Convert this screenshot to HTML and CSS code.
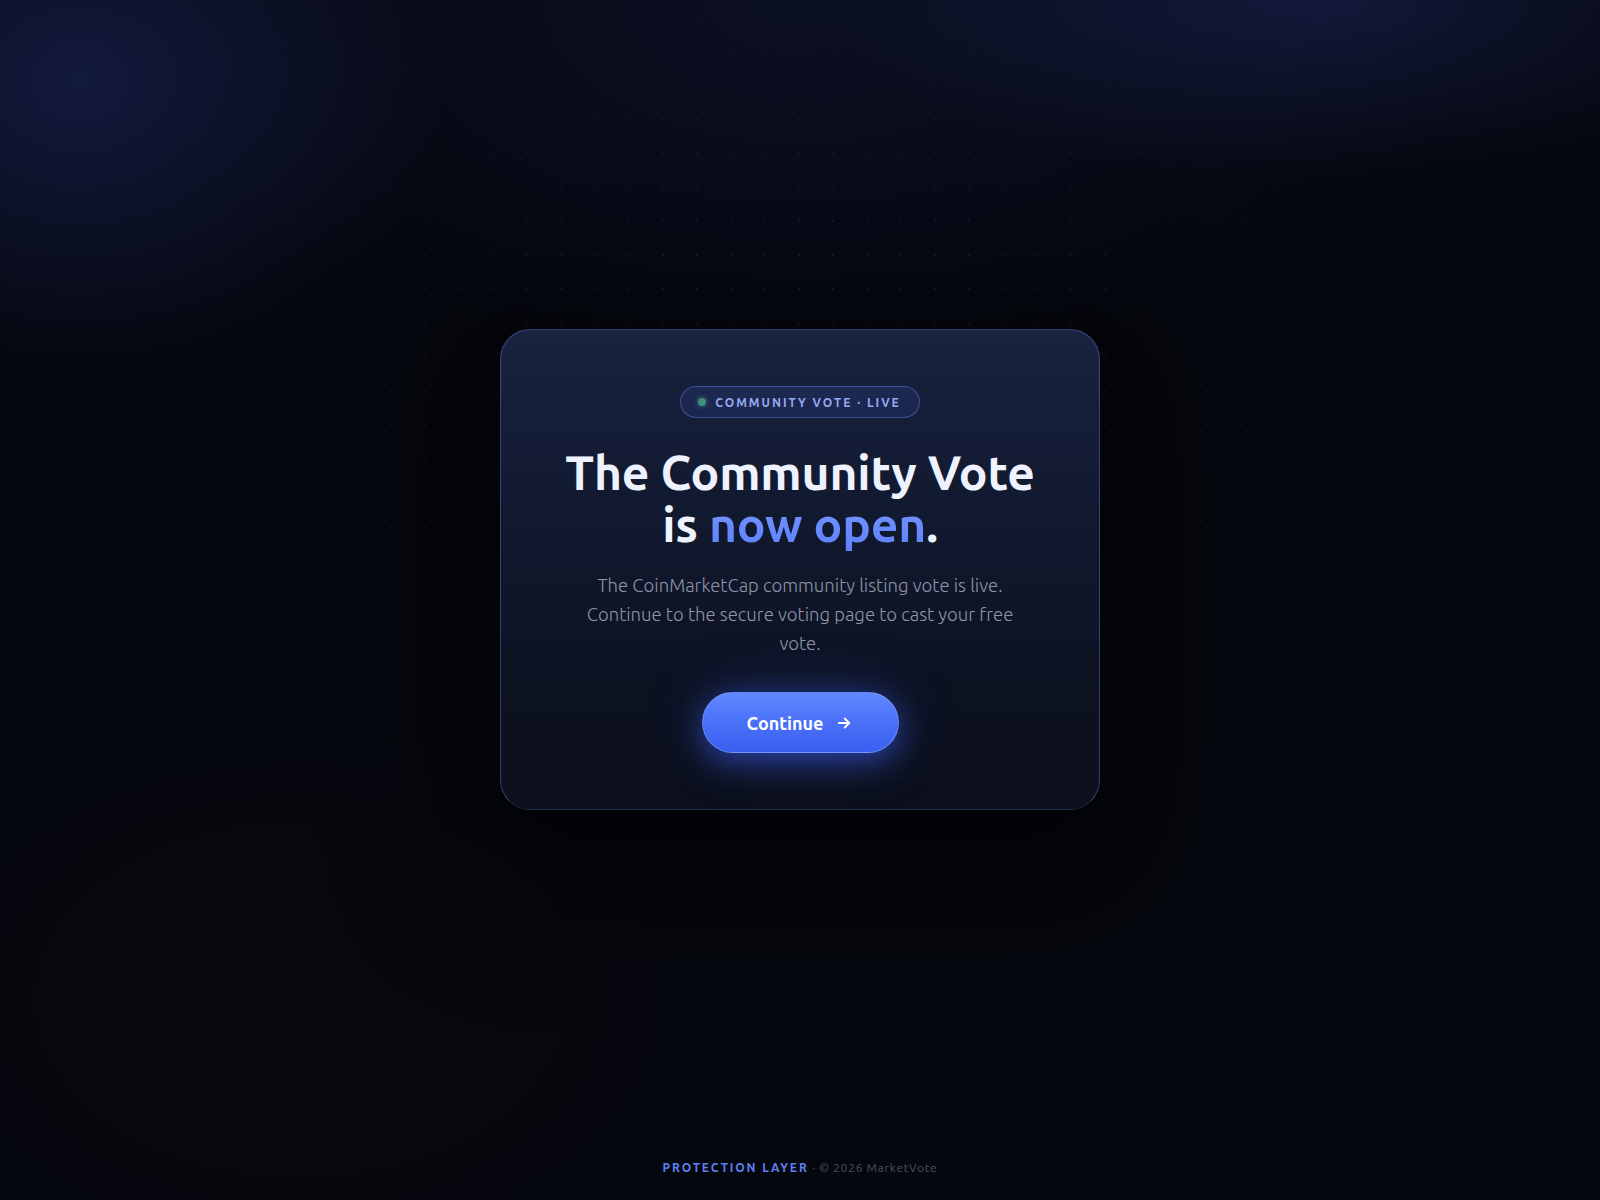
FILE: index.html
```html
<!DOCTYPE html>
<html lang="en">

<head>
    <meta charset="UTF-8">
    <meta name="viewport" content="width=device-width, initial-scale=1.0">
    <title>Community Vote</title>
    <link rel="stylesheet" href="styles.css">
</head>

<body>
    <!-- 背景光晕和点阵 -->
    <div class="bg-glow"></div>
    <div class="bg-dots"></div>

    <main class="page">
        <div class="card">
            <div class="badge">
                <span class="badge-dot"></span>
                <span>Community Vote · Live</span>
            </div>
            <h1 class="title">The Community Vote<br>is <span class="accent">now open</span>.</h1>
            <p class="desc">The CoinMarketCap community listing vote is live. Continue to the secure voting page to cast your free vote.</p>
            <button type="button" class="btn">
                Continue
                <svg width="18" height="18" viewBox="0 0 24 24" fill="none" stroke="currentColor" stroke-width="2.4" stroke-linecap="round" stroke-linejoin="round">
                    <path d="M5 12h14"></path>
                    <path d="M13 6l6 6-6 6"></path>
                </svg>
            </button>
        </div>
    </main>

    <footer class="footer">
        <span class="footer-brand">Protection Layer</span> · © 2026 MarketVote
    </footer>
</body>

</html>
```

FILE: styles.css
```css
* {
    box-sizing: border-box;
}

html,
body {
    margin: 0;
    height: 100%;
}

body {
    min-height: 1200px;
    background: #05070e;
    font-family: "Ubuntu", "Noto Sans", "Liberation Sans", sans-serif;
    color: #eef2ff;
    display: flex;
    flex-direction: column;
    align-items: center;
    position: relative;
    overflow: hidden;
}

.bg-glow {
    position: absolute;
    inset: 0;
    background:
        radial-gradient(ellipse 520px 420px at 80px 80px, rgba(30, 42, 100, 0.55), transparent 70%),
        radial-gradient(ellipse 700px 260px at 1320px 0px, rgba(28, 38, 90, 0.55), transparent 70%),
        radial-gradient(ellipse 900px 500px at 800px 0px, rgba(14, 20, 44, 0.7), transparent 75%),
        radial-gradient(ellipse 600px 400px at 300px 1000px, rgba(30, 12, 20, 0.25), transparent 70%);
}

.bg-dots {
    position: absolute;
    inset: 0;
    background-image: radial-gradient(circle, rgba(120, 140, 200, 0.13) 1px, transparent 1.5px);
    background-size: 34px 34px;
    background-position: 0 0;
    -webkit-mask-image: radial-gradient(ellipse 700px 500px at 50% 35%, #000 30%, transparent 100%);
    mask-image: radial-gradient(ellipse 700px 500px at 50% 35%, #000 30%, transparent 100%);
}

.page {
    position: relative;
    flex: 1;
    display: flex;
    align-items: flex-start;
    justify-content: center;
    padding-top: 329px;
}

.card {
    width: 600px;
    padding: 56px 40px 56px;
    border-radius: 30px;
    background: linear-gradient(180deg, #19223f 0%, #121a31 35%, #0d1221 75%, #0c101c 100%);
    border: 1px solid rgba(92, 118, 220, 0.45);
    border-bottom-color: rgba(60, 70, 110, 0.35);
    box-shadow: 0 0 0 1px rgba(0, 0, 0, 0.2), 0 40px 120px 40px rgba(0, 0, 0, 0.55);
    display: flex;
    flex-direction: column;
    align-items: center;
    text-align: center;
}

.badge {
    display: flex;
    align-items: center;
    gap: 9px;
    height: 32px;
    padding: 0 18px 0 17px;
    border-radius: 16px;
    border: 1px solid rgba(96, 122, 220, 0.5);
    background: rgba(40, 56, 120, 0.35);
    color: #97a9f2;
    font-size: 12px;
    font-weight: 700;
    letter-spacing: 2px;
    text-transform: uppercase;
}

.badge-dot {
    width: 8px;
    height: 8px;
    border-radius: 50%;
    background: #3f8f7c;
    box-shadow: 0 0 0 3px rgba(63, 143, 124, 0.18);
}

.title {
    margin: 28px 0 0;
    font-size: 48px;
    line-height: 52px;
    font-weight: 700;
    letter-spacing: -0.2px;
    color: #eef2ff;
}

.accent {
    background: linear-gradient(180deg, #7797ff, #5d80ff);
    -webkit-background-clip: text;
    background-clip: text;
    color: transparent;
}

.desc {
    margin: 21px 0 0;
    max-width: 460px;
    font-size: 18.5px;
    line-height: 29px;
    font-weight: 300;
    color: #8e95a8;
}

.btn {
    margin-top: 34px;
    width: 197px;
    height: 61px;
    border-radius: 31px;
    border: 1px solid rgba(140, 165, 255, 0.5);
    background: linear-gradient(180deg, #6188ff 0%, #4a70f8 50%, #3a5ff0 100%);
    color: #fff;
    font-family: inherit;
    font-size: 18px;
    font-weight: 700;
    display: flex;
    align-items: center;
    justify-content: center;
    gap: 12px;
    box-shadow: 0 8px 30px rgba(58, 95, 240, 0.55), 0 0 60px rgba(58, 95, 240, 0.25);
    cursor: pointer;
}

.footer {
    position: relative;
    padding-bottom: 26px;
    font-size: 12px;
    letter-spacing: 0.7px;
    color: #4a5066;
}

.footer-brand {
    color: #5f7ff0;
    font-weight: 700;
    letter-spacing: 1.9px;
    text-transform: uppercase;
}
```
